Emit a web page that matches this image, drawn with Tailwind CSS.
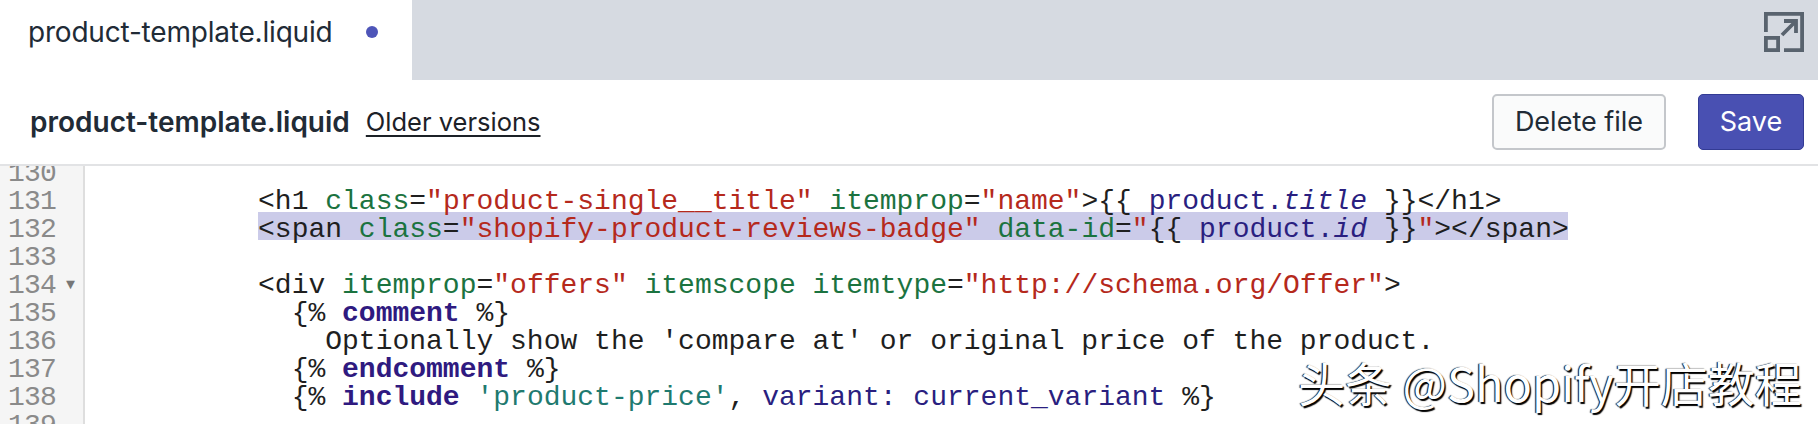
<!DOCTYPE html>
<html lang="en">
<head>
  <meta charset="UTF-8" />
  <title>product-template.liquid</title>
  <script src="https://cdn.jsdelivr.net/npm/@tailwindcss/browser@4"></script>
</head>
<body class="relative bg-white h-[424px] overflow-hidden font-['Inter',sans-serif] text-[#212b36]">
  <!-- tabs -->
  <div class="flex h-20 bg-[#d6dae1]">
    <div class="flex items-start w-[412px] h-20 bg-white pl-7 pt-[14px]">
      <span class="text-[28px] leading-9 tracking-[-0.2px]">product-template.liquid</span>
      <span class="w-3 h-3 rounded-full bg-[#4e55b8] ml-[34px] mt-3"></span>
    </div>
    <div class="flex-1 flex justify-end pr-[14px] pt-3">
      <svg width="40" height="40" viewBox="0 0 40 40" fill="none" stroke="#59636e" stroke-width="3.8">
        <path d="M1.9 20V1.9H38.1V38.1H20" />
        <rect x="1.9" y="25.9" width="12.2" height="12.2" />
        <path d="M18 23L31 10M20 9H32V21" />
      </svg>
    </div>
  </div>

  <!-- file header -->
  <div class="flex items-center h-[86px] border-b-2 border-[#e2e3e5] pl-[30px] pr-[14px]">
    <span class="text-[28px] font-semibold">product-template.liquid</span>
    <a class="text-[25.5px] underline underline-offset-4 ml-4 text-[#1c2127]">Older versions</a>
    <div class="ml-auto flex gap-8">
      <button class="w-[174px] h-14 rounded-[5px] border-2 border-[#c4c7cb] bg-[#fafbfb] text-[27px]">Delete file</button>
      <button class="w-[106px] h-14 rounded-[5px] border border-[#333b94] bg-[#4950b2] text-white text-[27px]">Save</button>
    </div>
  </div>

  <!-- editor -->
  <div class="relative flex h-[258px] overflow-hidden font-['Liberation_Mono',monospace] text-[28px] leading-[28px]">
    <div class="w-[85px] shrink-0 bg-[#f5f5f5] border-r-2 border-[#dedede] -mt-[6px] pl-2 text-[#8a8a8a] tracking-[-0.8px]">
      <div>130</div>
      <div>131</div>
      <div>132</div>
      <div>133</div>
      <div class="flex items-center">134<span class="text-[15px] ml-[10px] text-[#777]">▼</span></div>
      <div>135</div>
      <div>136</div>
      <div>137</div>
      <div>138</div>
      <div>139</div>
    </div>
    <!-- selected line sits behind the code -->
    <div class="absolute left-[258px] top-[46px] w-[1310px] h-7 bg-[#cbcbe9]"></div>
    <pre class="relative pl-[5px] pt-[22px] font-['Liberation_Mono',monospace] text-[#1f1f1f]">
          &lt;h1 <span class="text-[#1b7340]">class</span>=<span class="text-[#b5291c]">"product-single__title"</span> <span class="text-[#1b7340]">itemprop</span>=<span class="text-[#b5291c]">"name"</span>&gt;{{ <span class="text-[#2a1f80]">product.<i>title</i></span> }}&lt;/h1&gt;
          &lt;span <span class="text-[#1b7340]">class</span>=<span class="text-[#b5291c]">"shopify-product-reviews-badge"</span> <span class="text-[#1b7340]">data-id</span>=<span class="text-[#b5291c]">"</span>{{ <span class="text-[#2a1f80]">product.<i>id</i></span> }}<span class="text-[#b5291c]">"</span>&gt;&lt;/span&gt;

          &lt;div <span class="text-[#1b7340]">itemprop</span>=<span class="text-[#b5291c]">"offers"</span> <span class="text-[#1b7340]">itemscope</span> <span class="text-[#1b7340]">itemtype</span>=<span class="text-[#b5291c]">"http://schema.org/Offer"</span>&gt;
            {% <b class="text-[#2f1a80]">comment</b> %}
              Optionally show the 'compare at' or original price of the product.
            {% <b class="text-[#2f1a80]">endcomment</b> %}
            {% <b class="text-[#2f1a80]">include</b> <span class="text-[#1f7a70]">'product-price'</span>, <span class="text-[#2a1f80]">variant: current_variant</span> %}</pre>
  </div>

  <!-- watermark -->
  <div class="absolute left-[1298px] top-[352px] text-[47px] leading-[60px] whitespace-nowrap text-white font-['Noto_Sans_CJK_SC','Liberation_Sans',sans-serif] [text-shadow:1.5px_1.5px_1px_#000,-1px_0_1px_#000]">头条 @Shopify开店教程</div>
</body>
</html>
